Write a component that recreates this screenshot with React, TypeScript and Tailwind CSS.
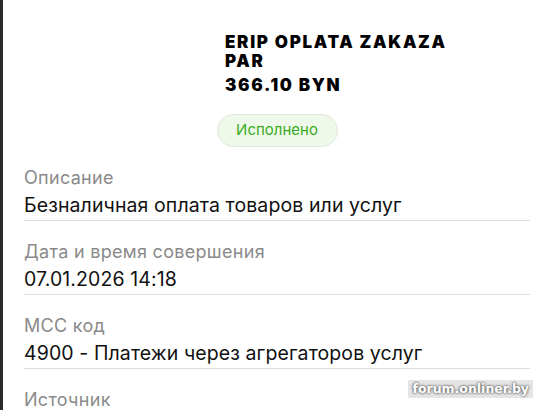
const rows = [
  { label: 'Описание', value: 'Безналичная оплата товаров или услуг' },
  { label: 'Дата и время совершения', value: '07.01.2026 14:18' },
  { label: 'MCC код', value: '4900 - Платежи через агрегаторов услуг' },
  { label: 'Источник', value: '' },
];

export default function App() {
  return (
    <div className="flex w-[551px] h-[410px] overflow-hidden bg-white font-['Inter',sans-serif]">
      <div className="w-[3px] shrink-0 bg-[#2b2b2b]" />
      <div className="relative flex-1">
        {/* Header */}
        <div className="pl-[222px] pt-[33px] font-black text-[17px] leading-[19px] text-black tracking-[1.7px]">
          <div>ERIP OPLATA ZAKAZA</div>
          <div>PAR</div>
          <div className="mt-[5px]">366.10 BYN</div>
        </div>
        <div className="mx-auto mt-[19px] h-[33px] w-[121px] rounded-full border border-[#dfe8db] bg-[#eff9ea] flex items-center justify-center text-[15px] text-[#3aab1e]">
          Исполнено
        </div>

        {/* Details */}
        <div className="mt-[20px] px-[21px]">
          {rows.map((row) => (
            <div key={row.label} className="mb-[20px]">
              <div className="text-[18px] leading-[22px] tracking-[0.3px] text-[#8a8a8a]">{row.label}</div>
              <div className="mt-[4px] pb-[3px] text-[19.5px] leading-[24px] tracking-[0.1px] text-[#111] border-b border-[#dedede]">
                {row.value}
              </div>
            </div>
          ))}
        </div>

        {/* Watermark */}
        <div className="absolute right-[18px] bottom-[12px] px-1 bg-black/10 font-['DejaVu_Sans',sans-serif] font-bold text-[12.5px] leading-[18px] text-white [text-shadow:0_0_3px_#555,0_0_2px_#666]">
          forum.onliner.by
        </div>
      </div>
    </div>
  );
}
